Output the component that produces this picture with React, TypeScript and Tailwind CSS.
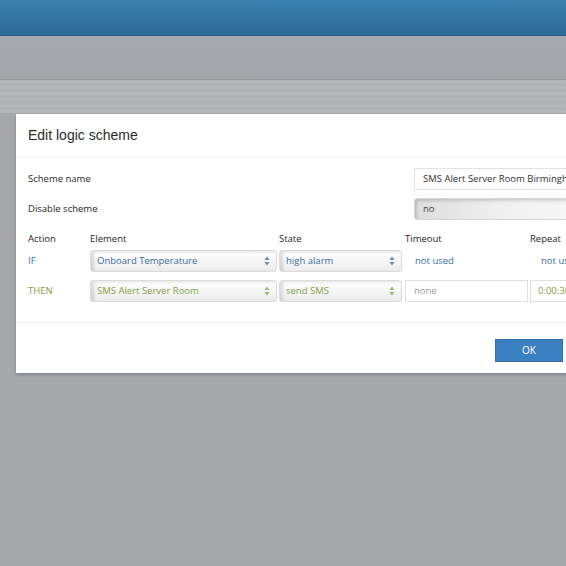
import React from "react";

const body = { fontFamily: '"Open Sans", "Noto Sans", sans-serif' };

function Arrows({ color }: { color: string }) {
  return (
    <svg width="6" height="10" viewBox="0 0 6 10" className="shrink-0">
      <path d="M3 0.5 L5.6 4 L0.4 4 Z" fill={color} />
      <path d="M3 9.5 L5.6 6 L0.4 6 Z" fill={color} />
    </svg>
  );
}

function Select({
  label,
  text,
  arrow,
  width,
}: {
  label: string;
  text: string;
  arrow: string;
  width: string;
}) {
  return (
    <div
      className={`${width} h-[22px] flex items-center justify-between pl-[6px] pr-[6px] rounded-[3px] border border-[#dcdcdc] bg-gradient-to-b from-white to-[#ececec] shadow-[inset_3px_1px_3px_rgba(0,0,0,0.12)] ${text}`}
    >
      <span className="truncate">{label}</span>
      <Arrows color={arrow} />
    </div>
  );
}

export default function App() {
  return (
    <div className="w-[566px] h-[566px] overflow-hidden bg-[#a4a8ab] flex flex-col" style={body}>
      <div className="h-[36px] shrink-0 bg-gradient-to-b from-[#3b81ad] to-[#2d6a97] border-b border-[#2b5c83]" />
      <div className="h-[44px] shrink-0 bg-gradient-to-b from-[#a7abb0] to-[#a2a6a9] border-b border-[#93979a]" />
      <div className="h-[33px] shrink-0 bg-[repeating-linear-gradient(180deg,#b4b6b8_0px,#b4b6b8_3px,#acaeb0_4px,#b1b3b5_6px)]" />

      <div className="pl-[16px] pt-[1px]">
        <div className="w-[559px] bg-white shadow-[0_2px_3px_rgba(0,0,0,0.2)]">
          <div className="h-[43px] flex items-center pl-[12px] border-b border-[#f2f2f2]">
            <h1 className="text-[14px] text-[#2a2a2a]" style={{ fontFamily: '"Liberation Sans", Arial, sans-serif' }}>
              Edit logic scheme
            </h1>
          </div>

          <div className="pl-[12px] pt-[11px] pb-[20px] border-b border-[#f0f0f0] text-[9.5px] text-[#1e1e1e]">
            <div className="flex items-center h-[22px]">
              <div className="w-[386px] shrink-0">Scheme name</div>
              <div className="w-[200px] shrink-0 h-[22px] flex items-center pl-[8px] border border-[#e2e2e2] bg-white text-[#333] whitespace-nowrap overflow-hidden">
                SMS Alert Server Room Birmingham
              </div>
            </div>
            <div className="flex items-center h-[22px] mt-[8px]">
              <div className="w-[386px] shrink-0">Disable scheme</div>
              <div className="w-[200px] shrink-0 h-[22px] flex items-center pl-[8px] rounded-[3px] border border-[#d6d6d6] bg-gradient-to-r from-[#dedede] via-[#f2f2f2] to-[#fafafa] shadow-[inset_2px_2px_3px_rgba(0,0,0,0.15)] text-[#444]">
                no
              </div>
            </div>

            <div className="grid grid-cols-[62px_189px_126px_125px_60px] items-center mt-[10px] h-[18px]">
              <div>Action</div>
              <div>Element</div>
              <div>State</div>
              <div>Timeout</div>
              <div>Repeat</div>
            </div>

            <div className="grid grid-cols-[62px_189px_126px_125px_60px] items-center mt-[2px] h-[22px]">
              <div className="text-[#3a6f9f]">IF</div>
              <Select label="Onboard Temperature" text="text-[#3a6f9f]" arrow="#6b8fb0" width="w-[187px]" />
              <Select label="high alarm" text="text-[#3a6f9f]" arrow="#6b8fb0" width="w-[123px]" />
              <div className="pl-[10px] text-[#3a6f9f]">not used</div>
              <div className="pl-[11px] text-[#3a6f9f] whitespace-nowrap">not used</div>
            </div>

            <div className="grid grid-cols-[62px_189px_126px_125px_60px] items-center mt-[8px] h-[22px]">
              <div className="text-[#7ea33d]">THEN</div>
              <Select label="SMS Alert Server Room" text="text-[#7ea33d]" arrow="#9dbb72" width="w-[187px]" />
              <Select label="send SMS" text="text-[#7ea33d]" arrow="#9dbb72" width="w-[123px]" />
              <div className="w-[123px] h-[22px] flex items-center pl-[8px] border border-[#e0e0e0] text-[#9a9a9a]">
                none
              </div>
              <div className="w-[60px] h-[22px] flex items-center pl-[7px] border border-[#e0e0e0] text-[#7ea33d] whitespace-nowrap">
                0:00:30
              </div>
            </div>
          </div>

          <div className="h-[50px] flex justify-end items-start pt-[16px] pr-[12px]">
            <button className="w-[68px] h-[23px] bg-[#3a7fc1] text-white text-[10px] border border-[#3572ad]">
              OK
            </button>
          </div>
        </div>
      </div>
    </div>
  );
}
